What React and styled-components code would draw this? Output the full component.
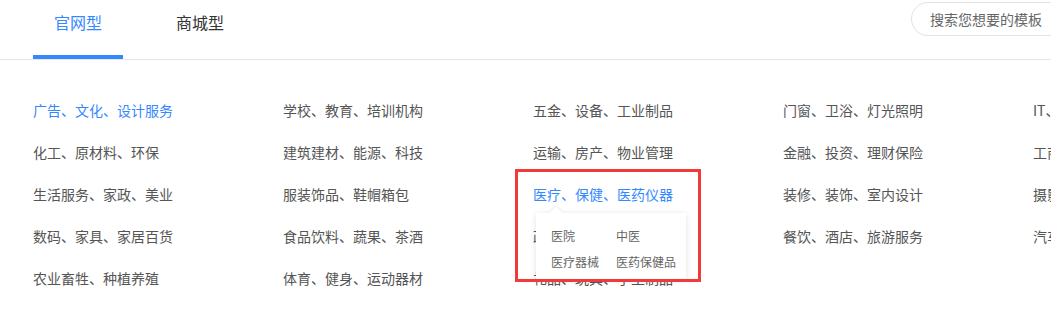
import styled, { createGlobalStyle } from "styled-components"

const Global = createGlobalStyle`
  html, body {
    margin: 0;
    padding: 0;
    background: #fff;
    overflow: hidden;
  }
  body {
    font-family: "Noto Sans CJK SC", "Liberation Sans", sans-serif;
  }
`

const Page = styled.div`
  width: 1400px;
`

const Header = styled.div`
  display: flex;
  align-items: flex-start;
  height: 59px;
  border-bottom: 1px solid #e6e6e6;
  padding-left: 33px;
`

const Tabs = styled.div`
  display: flex;
  gap: 32px;
`

const Tab = styled.div`
  width: 90px;
  height: 59px;
  box-sizing: border-box;
  padding-top: 10px;
  text-align: center;
  font-size: 16px;
  line-height: 24px;
  color: ${(props) => (props.active ? "#3388ff" : "#333")};
  border-bottom: 4px solid ${(props) => (props.active ? "#3388ff" : "transparent")};
`

const Search = styled.div`
  margin-left: 666px;
  margin-top: 2px;
  width: 220px;
  height: 34px;
  box-sizing: border-box;
  border: 1px solid #e3e3e3;
  border-radius: 17px;
  padding-left: 18px;
  font-size: 14px;
  line-height: 32px;
  color: #666;
`

const Grid = styled.div`
  display: grid;
  grid-template-columns: repeat(5, 250px);
  grid-auto-rows: 42px;
  padding: 29px 0 0 33px;
`

const Item = styled.div`
  position: relative;
  font-size: 14px;
  line-height: 42px;
  white-space: nowrap;
  color: ${(props) => (props.active ? "#3388ff" : "#555")};
  z-index: ${(props) => (props.hover ? 2 : "auto")};
`

const Popup = styled.div`
  position: absolute;
  left: 3px;
  top: 40px;
  width: 150px;
  box-sizing: border-box;
  padding: 10px 0 4px 15px;
  background: #fff;
  box-shadow: 0 1px 6px rgba(0, 0, 0, 0.12);
  display: grid;
  grid-template-columns: 65px 70px;
  grid-auto-rows: 26px;
  font-size: 12px;
  line-height: 26px;
  color: #666;

  &::before {
    content: "";
    position: absolute;
    left: 16px;
    top: -5px;
    width: 8px;
    height: 8px;
    background: #fff;
    transform: rotate(45deg);
    box-shadow: -1px -1px 2px rgba(0, 0, 0, 0.08);
  }
`

const Mark = styled.div`
  position: absolute;
  left: -18px;
  top: -4px;
  width: 186px;
  height: 113px;
  box-sizing: border-box;
  border: 3px solid #f23a3a;
  pointer-events: none;
`

const rows = [
  ["广告、文化、设计服务", "学校、教育、培训机构", "五金、设备、工业制品", "门窗、卫浴、灯光照明", "IT、互联网、电子商务"],
  ["化工、原材料、环保", "建筑建材、能源、科技", "运输、房产、物业管理", "金融、投资、理财保险", "工商、法律、财务"],
  ["生活服务、家政、美业", "服装饰品、鞋帽箱包", "医疗、保健、医药仪器", "装修、装饰、室内设计", "摄影、婚庆、影视"],
  ["数码、家具、家居百货", "食品饮料、蔬果、茶酒", "政府、组织、公共事业", "餐饮、酒店、旅游服务", "汽车、汽配、摩托"],
  ["农业畜牲、种植养殖", "体育、健身、运动器材", "礼品、玩具、手工制品", "", ""],
]

const sub = ["医院", "中医", "医疗器械", "医药保健品"]

function App() {
  return (
    <>
      <Global />
      <Page>
        <Header>
          <Tabs>
            <Tab active>官网型</Tab>
            <Tab>商城型</Tab>
          </Tabs>
          <Search>搜索您想要的模板</Search>
        </Header>
        <Grid>
          {rows.flat().map((t, i) => {
            const hover = i === 12
            return (
              <Item key={i} active={i === 0 || hover} hover={hover}>
                {t}
                {hover && (
                  <>
                    <Popup>
                      {sub.map((s) => (
                        <span key={s}>{s}</span>
                      ))}
                    </Popup>
                    <Mark />
                  </>
                )}
              </Item>
            )
          })}
        </Grid>
      </Page>
    </>
  )
}

export default App
